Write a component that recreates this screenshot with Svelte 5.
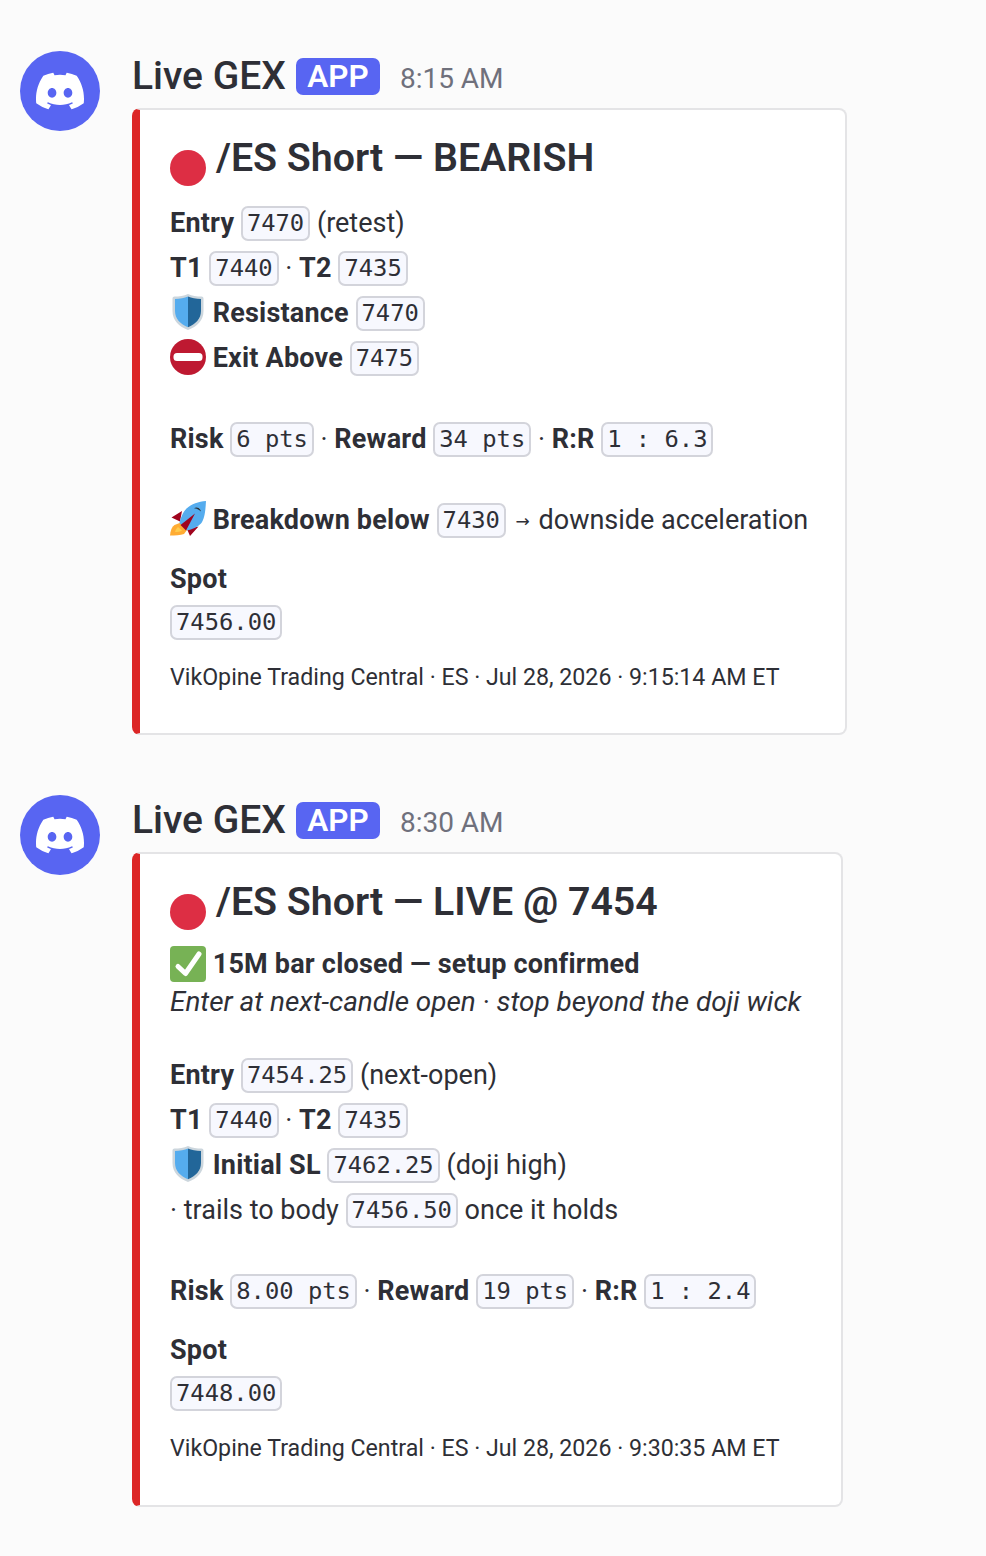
<script>
	const discordPath =
		"M13.545 2.907a13.2 13.2 0 0 0-3.257-1.011.05.05 0 0 0-.052.025c-.141.25-.297.577-.406.833a12.2 12.2 0 0 0-3.658 0 8 8 0 0 0-.412-.833.05.05 0 0 0-.052-.025c-1.125.194-2.22.534-3.257 1.011a.04.04 0 0 0-.021.018C.356 6.024-.213 9.047.066 12.032q.003.022.021.037a13.3 13.3 0 0 0 3.995 2.02.05.05 0 0 0 .056-.019q.463-.63.818-1.329a.05.05 0 0 0-.01-.059l-.018-.011a9 9 0 0 1-1.248-.595.05.05 0 0 1-.02-.066l.015-.019q.127-.095.248-.195a.05.05 0 0 1 .051-.007c2.619 1.196 5.454 1.196 8.041 0a.05.05 0 0 1 .053.007q.121.1.248.195a.05.05 0 0 1-.004.085 8 8 0 0 1-1.249.594.05.05 0 0 0-.03.03.05.05 0 0 0 .003.041c.24.465.515.909.817 1.329a.05.05 0 0 0 .056.019 13.2 13.2 0 0 0 4.001-2.02.05.05 0 0 0 .021-.037c.334-3.451-.559-6.449-2.366-9.106a.03.03 0 0 0-.02-.019m-8.198 7.307c-.789 0-1.438-.724-1.438-1.612s.637-1.613 1.438-1.613c.807 0 1.45.73 1.438 1.613 0 .888-.637 1.612-1.438 1.612m5.316 0c-.788 0-1.438-.724-1.438-1.612s.637-1.613 1.438-1.613c.807 0 1.451.73 1.438 1.613 0 .888-.631 1.612-1.438 1.612";
</script>

{#snippet header(time)}
	<div class="avatar">
		<svg viewBox="0 0 16 16" width="48" height="48"><path fill="#fff" d={discordPath} /></svg>
	</div>
	<div class="header">
		<span class="name">Live GEX</span>
		<span class="badge">APP</span>
		<span class="time">{time}</span>
	</div>
{/snippet}

{#snippet redDot()}
	<svg class="emoji dot" viewBox="0 0 36 36"><circle cx="18" cy="18" r="18" fill="#dd2e44" /></svg>
{/snippet}

{#snippet shield()}
	<svg class="emoji" viewBox="0 0 36 36">
		<path d="M18 0C14 2 9 2.500 4.500 2.500 3.400 2.500 2.500 3.400 2.500 4.500V17c0 9.500 6.500 15.500 15.500 19 9-3.500 15.500-9.500 15.500-19V4.500c0-1.100-.9-2-2-2C27 2.500 22 2 18 0z" fill="#ccd6dd" />
		<path d="M18 2.500C14.500 4 10 4.800 5 5V17c0 8 5.500 13 13 16.200z" fill="#55acee" />
		<path d="M18 2.500c3.500 1.500 8 2.300 13 2.500V17c0 8-5.500 13-13 16.200z" fill="#226699" />
	</svg>
{/snippet}

{#snippet noEntry()}
	<svg class="emoji" viewBox="0 0 36 36">
		<circle cx="18" cy="18" r="18" fill="#be1931" />
		<rect x="3.500" y="14" width="29" height="8" rx="3.500" fill="#fff" />
	</svg>
{/snippet}

{#snippet rocket()}
	<svg class="emoji" viewBox="0 0 36 36">
		<path d="M0 34.500c.5-4.500 1.500-8.500 4.500-10.500L11 21.500l6 7.500-3 4c-3.500 1.500-9 1.500-14 1.500z" fill="#ffac33" />
		<path d="M5 31c.5-2 1.500-4 3-5l4 3.500c-1.500 1-4.500 1.500-7 1.500z" fill="#ffcc4d" />
		<path d="M1.500 16.500L12 10l-2 10.500zM20 35l8.500-9.500L17 28z" fill="#a0041e" />
		<path d="M36 0c-7.500.5-14.500 3-19.500 7.500C13 11 10.500 17 9.500 22l7.500 7.500c5-1 10.500-3.500 14-7C35 18 35.500 8 36 0z" fill="#55acee" />
		<path d="M25 12.500L10.500 24l5.500 5.500z" fill="#a0041e" />
		<path d="M24 7.200c2.800-1.500 6-.3 7 3.300-2-2.200-4.500-3-7-3.300z" fill="#292f33" />
	</svg>
{/snippet}

{#snippet check()}
	<svg class="emoji" viewBox="0 0 36 36">
		<rect width="36" height="36" rx="4" fill="#77b255" />
		<path d="M8 20.500l7.500 7L29 8" fill="none" stroke="#fff" stroke-width="5" stroke-linecap="round" stroke-linejoin="round" />
	</svg>
{/snippet}

<main class="page">
	<section class="message">
		{@render header("8:15 AM")}
		<article class="embed wide">
			<h2>{@render redDot()}<span>/ES Short — BEARISH</span></h2>
			<p class="line"><b>Entry</b> <code>7470</code> (retest)</p>
			<p class="line"><b>T1</b> <code>7440</code> · <b>T2</b> <code>7435</code></p>
			<p class="line">{@render shield()} <b>Resistance</b> <code>7470</code></p>
			<p class="line">{@render noEntry()} <b>Exit Above</b> <code>7475</code></p>
			<p class="line gap"><b>Risk</b> <code>6 pts</code> · <b>Reward</b> <code>34 pts</code> · <b>R:R</b> <code>1 : 6.3</code></p>
			<p class="line gap">{@render rocket()} <b>Breakdown below</b> <code>7430</code> <span class="arrow">→</span> downside acceleration</p>
			<p class="field"><b>Spot</b></p>
			<p class="line value"><code>7456.00</code></p>
			<footer>VikOpine Trading Central · ES · Jul 28, 2026 · 9:15:14 AM ET</footer>
		</article>
	</section>

	<section class="message">
		{@render header("8:30 AM")}
		<article class="embed narrow">
			<h2>{@render redDot()}<span>/ES Short — LIVE @ 7454</span></h2>
			<p class="plain confirm">{@render check()} <b>15M bar closed — setup confirmed</b></p>
			<p class="plain"><i>Enter at next-candle open · stop beyond the doji wick</i></p>
			<p class="line after-plain"><b>Entry</b> <code>7454.25</code> (next-open)</p>
			<p class="line"><b>T1</b> <code>7440</code> · <b>T2</b> <code>7435</code></p>
			<p class="line">{@render shield()} <b>Initial SL</b> <code>7462.25</code> (doji high)</p>
			<p class="line">· trails to body <code>7456.50</code> once it holds</p>
			<p class="line gap"><b>Risk</b> <code>8.00 pts</code> · <b>Reward</b> <code>19 pts</code> · <b>R:R</b> <code>1 : 2.4</code></p>
			<p class="field"><b>Spot</b></p>
			<p class="line value"><code>7448.00</code></p>
			<footer>VikOpine Trading Central · ES · Jul 28, 2026 · 9:30:35 AM ET</footer>
		</article>
	</section>
</main>

<style>
	:global(body) {
		background: #fbfbfb;
	}

	.page {
		display: flex;
		flex-direction: column;
		gap: 60px;
		padding: 51px 0 0 20px;
		font-family: Roboto, sans-serif;
		font-size: 27px;
		color: #2e2f36;
	}

	.message {
		display: grid;
		grid-template-columns: 80px auto;
		grid-template-rows: 57px auto;
		column-gap: 32px;
		justify-content: start;
	}

	.avatar {
		grid-row: 1 / 3;
		width: 80px;
		height: 80px;
		border-radius: 50%;
		background: #5865f2;
		display: flex;
		align-items: center;
		justify-content: center;
	}

	.header {
		display: flex;
		align-items: center;
		height: 50px;
		margin-left: 1px;
	}

	.name {
		font-size: 39px;
		font-weight: 500;
		color: #2e2f36;
		margin-left: -1px;
	}

	.badge {
		margin-left: 10px;
		width: 84px;
		height: 37px;
		border-radius: 7px;
		background: #5865f2;
		color: #fff;
		font-size: 31.500px;
		font-weight: 600;
		line-height: 37px;
		text-align: center;
	}

	.time {
		margin-left: 20px;
		margin-top: 5px;
		font-size: 28px;
		color: #6f707c;
	}

	.embed {
		box-sizing: border-box;
		background: #fff;
		border: 2px solid #e4e4e6;
		border-left: 8px solid #dc2626;
		border-radius: 8px;
		padding: 26px 20px 40px 30px;
		grid-column: 2;
	}

	.wide {
		width: 715px;
	}

	.narrow {
		width: 711px;
		padding-bottom: 41px;
	}

	h2 {
		display: flex;
		align-items: center;
		gap: 10px;
		margin: 0 0 20px;
		height: 44px;
		font-size: 39.300px;
		font-weight: 600;
		line-height: 46px;
		white-space: nowrap;
	}

	p {
		margin: 0;
		white-space: nowrap;
	}

	.line {
		box-sizing: border-box;
		height: 45px;
		padding-top: 1px;
		line-height: 45px;
	}

	.line code {
		margin-top: -2px;
	}

	.line .emoji {
		margin-top: -6px;
	}

	.gap {
		margin-top: 36px;
	}

	.after-plain {
		margin-top: 34px;
	}

	.value {
		margin-top: 2px;
	}

	.plain {
		box-sizing: border-box;
		height: 37px;
		padding-top: 2px;
		line-height: 37px;
	}

	.plain .emoji {
		margin-top: -4px;
	}

	.confirm {
		margin-top: 1px;
	}

	.field {
		box-sizing: border-box;
		margin-top: 18px;
		height: 37px;
		padding-top: 1px;
		line-height: 37px;
	}

	b {
		font-weight: 700;
		letter-spacing: 0.2px;
	}

	i {
		font-size: 27.900px;
	}

	.arrow {
		margin: 0 2px 0 3px;
		font-family: "DejaVu Sans", sans-serif;
		font-size: 17px;
		vertical-align: 2px;
	}

	code {
		display: inline-block;
		box-sizing: border-box;
		height: 35px;
		padding: 0 4px;
		border: 2px solid #d3d4db;
		border-radius: 7px;
		background: #f7f8fe;
		font-family: "DejaVu Sans Mono", monospace;
		font-size: 23.800px;
		line-height: 31px;
		vertical-align: middle;
	}

	.emoji {
		width: 36px;
		height: 36px;
		vertical-align: middle;
	}

	h2 .emoji {
		flex: none;
	}

	.dot {
		margin-top: 20px;
	}

	footer {
		margin-top: 17px;
		height: 32px;
		font-size: 23.200px;
		line-height: 33px;
		white-space: nowrap;
	}
</style>
